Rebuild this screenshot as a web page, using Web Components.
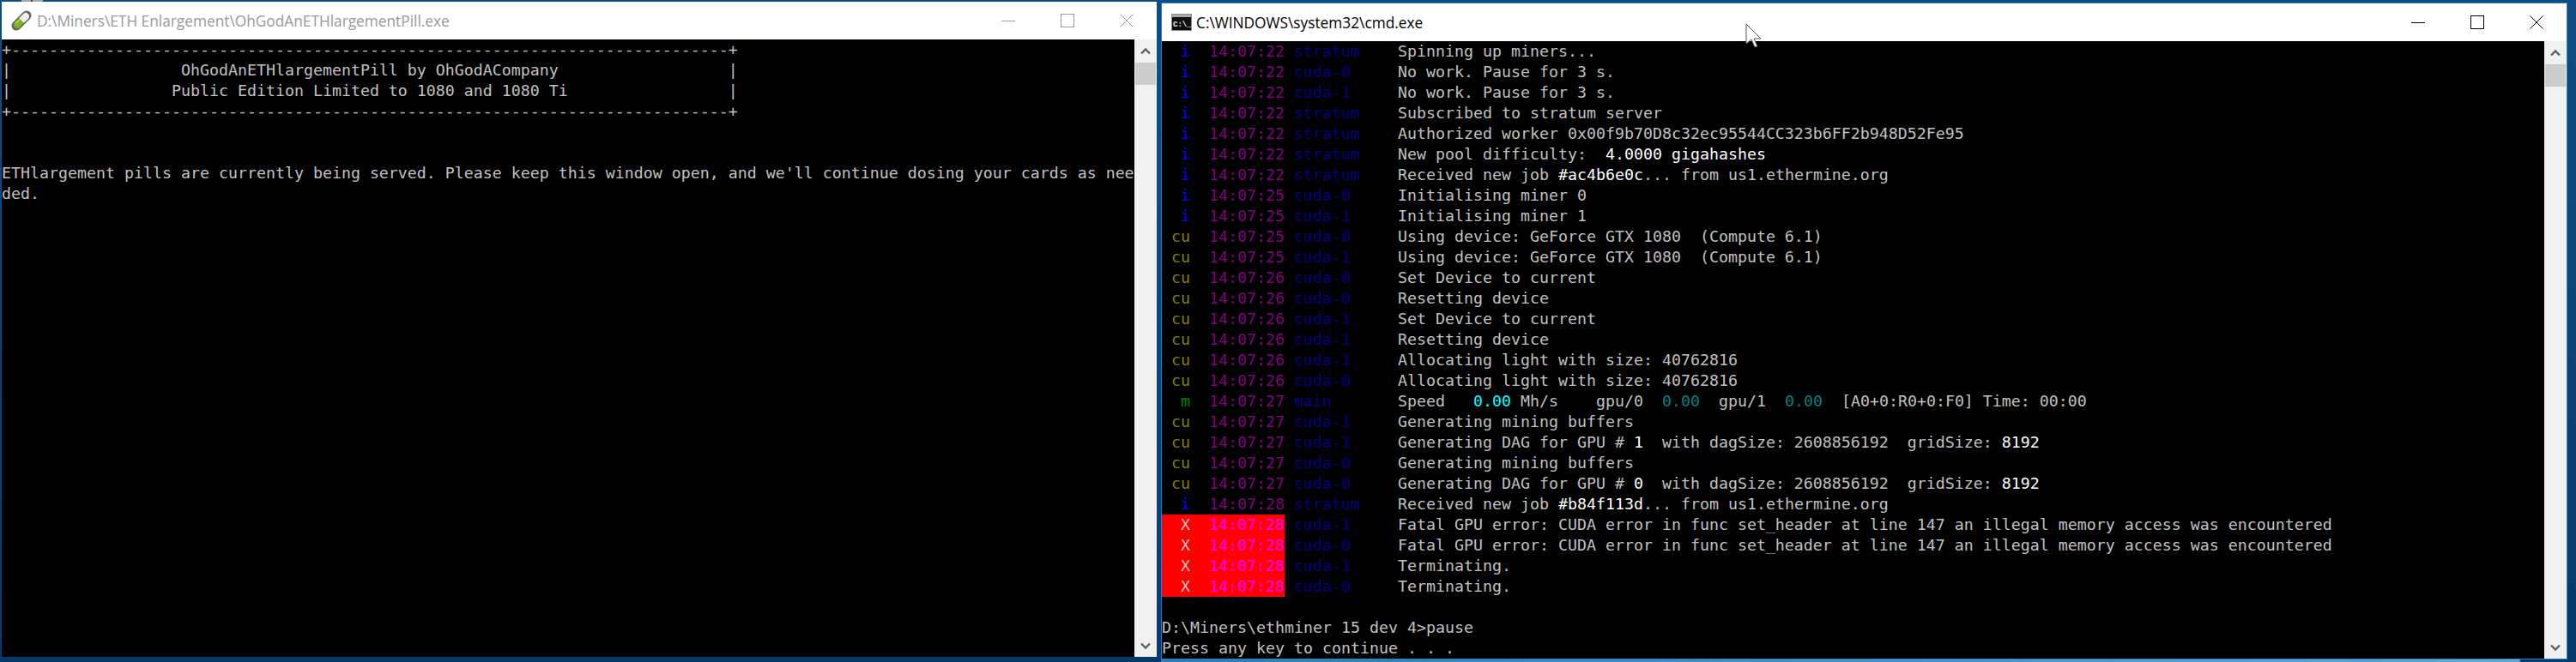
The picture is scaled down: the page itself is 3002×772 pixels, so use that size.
<!DOCTYPE html>
<html>
<head>
<meta charset="utf-8">
<title>ethminer</title>
<style>
    html, body { margin: 0; padding: 0; background: #0b4678; }
</style>
</head>
<body>
<desk-top>
    <console-window caption="D:\Miners\ETH Enlargement\OhGodAnETHlargementPill.exe" icon="pill">
        <term-line>+----------------------------------------------------------------------------+</term-line>
        <term-line>|                  OhGodAnETHlargementPill by OhGodACompany                  |</term-line>
        <term-line>|                 Public Edition Limited to 1080 and 1080 Ti                 |</term-line>
        <term-line>+----------------------------------------------------------------------------+</term-line>
        <term-line> </term-line>
        <term-line> </term-line>
        <term-line>ETHlargement pills are currently being served. Please keep this window open, and we'll continue dosing your cards as nee</term-line>
        <term-line>ded.</term-line>
    </console-window>
    <console-window caption="C:\WINDOWS\system32\cmd.exe" icon="cmd" active>
        <log-line tag="i" time="14:07:22" thread="stratum">Spinning up miners...</log-line>
        <log-line tag="i" time="14:07:22" thread="cuda-0">No work. Pause for 3 s.</log-line>
        <log-line tag="i" time="14:07:22" thread="cuda-1">No work. Pause for 3 s.</log-line>
        <log-line tag="i" time="14:07:22" thread="stratum">Subscribed to stratum server</log-line>
        <log-line tag="i" time="14:07:22" thread="stratum">Authorized worker 0x00f9b70D8c32ec95544CC323b6FF2b948D52Fe95</log-line>
        <log-line tag="i" time="14:07:22" thread="stratum">New pool difficulty:  <term-hi>4.0000 gigahashes</term-hi></log-line>
        <log-line tag="i" time="14:07:22" thread="stratum">Received new job <term-hi>#ac4b6e0c</term-hi>... from us1.ethermine.org</log-line>
        <log-line tag="i" time="14:07:25" thread="cuda-0">Initialising miner 0</log-line>
        <log-line tag="i" time="14:07:25" thread="cuda-1">Initialising miner 1</log-line>
        <log-line tag="cu" time="14:07:25" thread="cuda-0">Using device: GeForce GTX 1080  (Compute 6.1)</log-line>
        <log-line tag="cu" time="14:07:25" thread="cuda-1">Using device: GeForce GTX 1080  (Compute 6.1)</log-line>
        <log-line tag="cu" time="14:07:26" thread="cuda-0">Set Device to current</log-line>
        <log-line tag="cu" time="14:07:26" thread="cuda-0">Resetting device</log-line>
        <log-line tag="cu" time="14:07:26" thread="cuda-1">Set Device to current</log-line>
        <log-line tag="cu" time="14:07:26" thread="cuda-1">Resetting device</log-line>
        <log-line tag="cu" time="14:07:26" thread="cuda-1">Allocating light with size: 40762816</log-line>
        <log-line tag="cu" time="14:07:26" thread="cuda-0">Allocating light with size: 40762816</log-line>
        <log-line tag="m" time="14:07:27" thread="main">Speed   <term-hi tone="cyan">0.00</term-hi> Mh/s    gpu/0  <term-hi tone="teal">0.00</term-hi>  gpu/1  <term-hi tone="teal">0.00</term-hi>  [A0+0:R0+0:F0] Time: 00:00</log-line>
        <log-line tag="cu" time="14:07:27" thread="cuda-1">Generating mining buffers</log-line>
        <log-line tag="cu" time="14:07:27" thread="cuda-1">Generating DAG for GPU # <term-hi>1</term-hi>  with dagSize: 2608856192  gridSize: <term-hi>8192</term-hi></log-line>
        <log-line tag="cu" time="14:07:27" thread="cuda-0">Generating mining buffers</log-line>
        <log-line tag="cu" time="14:07:27" thread="cuda-0">Generating DAG for GPU # <term-hi>0</term-hi>  with dagSize: 2608856192  gridSize: <term-hi>8192</term-hi></log-line>
        <log-line tag="i" time="14:07:28" thread="stratum">Received new job <term-hi>#b84f113d</term-hi>... from us1.ethermine.org</log-line>
        <log-line tag="X" time="14:07:28" thread="cuda-1">Fatal GPU error: CUDA error in func set_header at line 147 an illegal memory access was encountered</log-line>
        <log-line tag="X" time="14:07:28" thread="cuda-0">Fatal GPU error: CUDA error in func set_header at line 147 an illegal memory access was encountered</log-line>
        <log-line tag="X" time="14:07:28" thread="cuda-1">Terminating.</log-line>
        <log-line tag="X" time="14:07:28" thread="cuda-0">Terminating.</log-line>
        <term-line> </term-line>
        <term-line>D:\Miners\ethminer 15 dev 4&gt;pause</term-line>
        <term-line>Press any key to continue . . .</term-line>
    </console-window>
    <mouse-pointer></mouse-pointer>
</desk-top>

<script>
const ICONS = {
    pill: `<svg width="26" height="26" viewBox="0 0 26 26">
        <g transform="rotate(-45 13 13)">
            <rect x="-1" y="7.5" width="28" height="11" rx="5.5" fill="#5e6a5e"/>
            <path d="M13 9H6a4 4 0 0 0 0 8h7z" fill="#7ab51d"/>
            <path d="M13 9h7a4 4 0 0 1 0 8h-7z" fill="#eeeeee"/>
            <path d="M6 10.5h6" stroke="#b9e05a" stroke-width="1.4"/>
        </g>
    </svg>`,
    cmd: `<svg width="24" height="20" viewBox="0 0 24 20">
        <rect width="24" height="20" fill="#8c8c8c"/>
        <rect x="1" y="1" width="22" height="3" fill="#a8a8a8"/>
        <rect x="1" y="4" width="22" height="15" fill="#101010"/>
        <text x="2" y="15" font-family="'Liberation Mono', monospace" font-size="9" font-weight="700" fill="#f0f0f0">C:\\_</text>
    </svg>`
};

class DeskTop extends HTMLElement {
    constructor() {
        super();
        this.attachShadow({ mode: 'open' });
    }

    connectedCallback() {
        this.shadowRoot.innerHTML = `
            <style>
                :host {
                    display: flex;
                    position: relative;
                    align-items: flex-start;
                    gap: 5px;
                    box-sizing: border-box;
                    width: 3002px;
                    height: 772px;
                    padding: 2px 0 0 2px;
                    overflow: hidden;
                    background:
                        linear-gradient(#a8a8a8, #a8a8a8) 25px 0 / 11px 2px no-repeat,
                        linear-gradient(#a8a8a8, #a8a8a8) 38px 0 / 12px 2px no-repeat,
                        linear-gradient(90deg, #2c7db5 0, #62a9c9 96%, #0a3a68 96.1%) 1353px 769px / 1649px 3px no-repeat,
                        linear-gradient(180deg, #0e4d84, #073a6c);
                }
            </style>
            <slot></slot>
        `;
    }
}

class ConsoleWindow extends HTMLElement {
    constructor() {
        super();
        this.attachShadow({ mode: 'open' });
    }

    connectedCallback() {
        const caption = this.getAttribute('caption');
        const icon = ICONS[this.getAttribute('icon')];
        this.shadowRoot.innerHTML = `
            <style>
                :host {
                    display: flex;
                    flex-direction: column;
                    flex: none;
                    width: 1346px;
                    background: #fff;
                    font-family: "Open Sans", sans-serif;
                }
                :host([active]) {
                    width: 1637px;
                    margin-top: 1px;
                    border: 1px solid #2a7fc8;
                }
                .title {
                    display: flex;
                    align-items: center;
                    height: 44px;
                    padding-left: 10px;
                    color: #999;
                    font-size: 17.3px;
                    white-space: nowrap;
                }
                :host([active]) .title { color: #000; padding-left: 11px; }
                .icon { display: flex; width: 31px; }
                :host([active]) .icon { width: 29px; }
                .caption { flex: 1; }
                .controls { display: flex; stroke: #999; margin-right: 1px; }
                :host([active]) .controls { stroke: #000; }
                .controls button {
                    display: flex;
                    align-items: center;
                    justify-content: center;
                    width: 69px;
                    height: 44px;
                    padding: 0;
                    border: 0;
                    background: none;
                }
                .body { display: flex; height: 720px; }
                .screen {
                    flex: 1;
                    background: #000;
                    color: #c0c0c0;
                    font: 18.27px/24px "DejaVu Sans Mono", "Liberation Mono", monospace;
                    overflow: hidden;
                }
            </style>
            <div class="title">
                <span class="icon">${icon}</span>
                <span class="caption"></span>
                <span class="controls">
                    <button><svg width="16" height="16" fill="none"><path d="M0 8.5h16"/></svg></button>
                    <button><svg width="16" height="16" fill="none"><rect x=".5" y=".5" width="15" height="15"/></svg></button>
                    <button><svg width="16" height="16" fill="none"><path d="M.5.5l15 15M15.5.5l-15 15"/></svg></button>
                </span>
            </div>
            <div class="body">
                <div class="screen"><slot></slot></div>
                <win-scrollbar></win-scrollbar>
            </div>
        `;
        this.shadowRoot.querySelector('.caption').textContent = caption;
    }
}

class WinScrollbar extends HTMLElement {
    constructor() {
        super();
        this.attachShadow({ mode: 'open' });
    }

    connectedCallback() {
        this.shadowRoot.innerHTML = `
            <style>
                :host {
                    display: flex;
                    flex-direction: column;
                    align-items: center;
                    flex: none;
                    width: 26px;
                    background: #f0f0f0;
                }
                .arrow { height: 26px; display: flex; align-items: center; justify-content: center; }
                .thumb { width: 24px; height: 26px; background: #cdcdcd; margin-top: 1px; }
                .fill { flex: 1; }
            </style>
            <div class="arrow"><svg width="12" height="9"><path d="M1 7.5l5-5 5 5" fill="none" stroke="#606060" stroke-width="2.4"/></svg></div>
            <div class="thumb"></div>
            <div class="fill"></div>
            <div class="arrow"><svg width="12" height="9"><path d="M1 1.5l5 5 5-5" fill="none" stroke="#606060" stroke-width="2.4"/></svg></div>
        `;
    }
}

class TermLine extends HTMLElement {
    constructor() {
        super();
        this.attachShadow({ mode: 'open' });
    }

    connectedCallback() {
        this.shadowRoot.innerHTML = `
            <style>
                :host { display: block; height: 24px; }
                .txt { white-space: pre; }
            </style>
            <span class="txt"><slot></slot></span>
        `;
    }
}

class TermHi extends HTMLElement {
    constructor() {
        super();
        this.attachShadow({ mode: 'open' });
    }

    connectedCallback() {
        // no whitespace round the slot: this sits inside white-space: pre
        this.shadowRoot.innerHTML = `<style>
                :host { color: #fff; }
                :host([tone="cyan"]) { color: #00ffff; }
                :host([tone="teal"]) { color: #008080; }
            </style><slot></slot>`;
    }
}

const TAG_COLORS = { i: '#0000ff', cu: '#808000', m: '#008000', X: '#c0c0c0' };

class LogLine extends HTMLElement {
    constructor() {
        super();
        this.attachShadow({ mode: 'open' });
    }

    connectedCallback() {
        const tag = this.getAttribute('tag');
        const error = tag === 'X';
        this.shadowRoot.innerHTML = `
            <style>
                :host { display: flex; height: 24px; }
                .lead {
                    display: flex;
                    flex: none;
                    width: 143px;
                    background: ${error ? '#ff0000' : 'transparent'};
                }
                .tag {
                    width: 33px;
                    margin-right: 22px;
                    text-align: right;
                    color: ${TAG_COLORS[tag]};
                }
                .time { color: ${error ? '#ff00ff' : '#800080'}; }
                .thread {
                    flex: none;
                    box-sizing: border-box;
                    width: 132px;
                    padding-left: 11px;
                    color: #000080;
                }
                .txt { white-space: pre; }
            </style>
            <span class="lead">
                <span class="tag">${tag}</span>
                <span class="time">${this.getAttribute('time')}</span>
            </span>
            <span class="thread">${this.getAttribute('thread')}</span>
            <span class="txt"><slot></slot></span>
        `;
    }
}

class MousePointer extends HTMLElement {
    constructor() {
        super();
        this.attachShadow({ mode: 'open' });
    }

    connectedCallback() {
        this.shadowRoot.innerHTML = `
            <style>
                :host { position: absolute; left: 2034px; top: 27px; width: 19px; height: 29px; }
            </style>
            <svg width="19" height="29" viewBox="0 0 19 29">
                <path d="M1 1v23l6-5 4 9 3-1-4-9h8z" fill="#fff" stroke="#555" stroke-width="1"/>
            </svg>
        `;
    }
}

customElements.define('desk-top', DeskTop);
customElements.define('console-window', ConsoleWindow);
customElements.define('win-scrollbar', WinScrollbar);
customElements.define('term-line', TermLine);
customElements.define('term-hi', TermHi);
customElements.define('log-line', LogLine);
customElements.define('mouse-pointer', MousePointer);
</script>
</body>
</html>
